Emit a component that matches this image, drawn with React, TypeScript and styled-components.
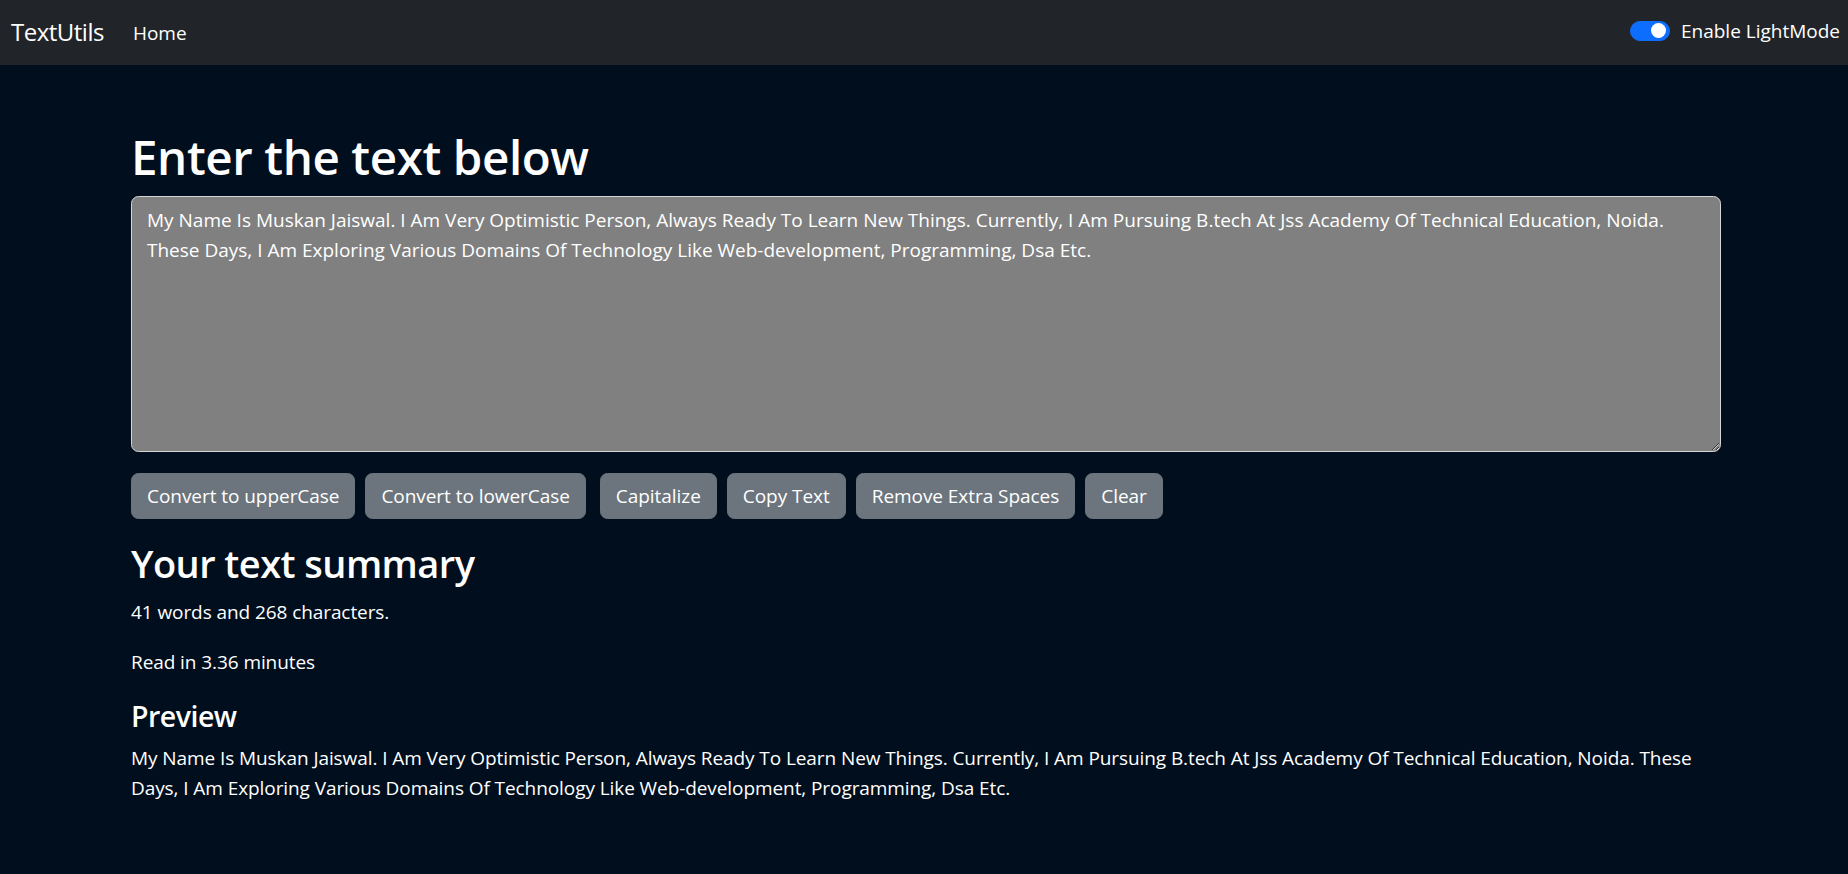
import React from "react";
import styled, { createGlobalStyle } from "styled-components";

const GlobalStyle = createGlobalStyle`
  html, body {
    margin: 0;
    padding: 0;
    background: #010e1d;
    font-family: "Open Sans", "Noto Sans", sans-serif;
    font-size: 19px;
    line-height: 30px;
    color: #ffffff;
  }
  * { box-sizing: border-box; }
`;

const Page = styled.div`
  min-height: 874px;
  background: #010e1d;
`;

const NavBar = styled.nav`
  height: 65px;
  background: #212529;
  display: flex;
  align-items: center;
  padding: 0 8px 0 11px;
`;

const Brand = styled.a`
  font-size: 24px;
  line-height: 36px;
  letter-spacing: -0.5px;
  color: #ffffff;
  margin-right: 19px;
  margin-top: -2px;
  text-decoration: none;
`;

const NavLink = styled.a`
  font-size: 19px;
  line-height: 30px;
  color: #ffffff;
  padding: 0 10px;
  text-decoration: none;
`;

const Spacer = styled.div`
  flex: 1;
`;

const SwitchWrap = styled.label`
  display: flex;
  align-items: center;
  gap: 11px;
  font-size: 19px;
  line-height: 30px;
  color: #ffffff;
  margin-top: -4px;
`;

const SwitchTrack = styled.span<{ $on: boolean }>`
  position: relative;
  display: inline-block;
  width: 40px;
  height: 20px;
  border-radius: 10px;
  background: ${(p) => (p.$on ? "#0d6efd" : "#ffffff")};
  border: 1px solid ${(p) => (p.$on ? "#0d6efd" : "#bbb")};
`;

const SwitchKnob = styled.span<{ $on: boolean }>`
  position: absolute;
  top: 1.5px;
  ${(p) => (p.$on ? "right: 2.5px;" : "left: 2.5px;")}
  width: 15px;
  height: 15px;
  border-radius: 50%;
  background: ${(p) => (p.$on ? "#ffffff" : "#bbb")};
`;

const Main = styled.main`
  padding: 63px 0 40px 131px;
`;

const Section = styled.section<{ $gapTop?: number }>`
  width: 1590px;
  margin-top: ${(p) => p.$gapTop ?? 0}px;
`;

const Title = styled.h1`
  margin: 0 0 11px;
  font-size: 47.5px;
  line-height: 57px;
  font-weight: 600;
  letter-spacing: -0.4px;
`;

const TextBox = styled.textarea`
  display: block;
  width: 100%;
  height: 256px;
  margin: 0;
  padding: 7.5px 15px;
  font-family: inherit;
  font-size: 19px;
  line-height: 30px;
  color: #ffffff;
  background: #808080;
  border: 1px solid #d4d6d8;
  border-radius: 7.5px;
  outline: none;
  resize: vertical;
`;

const ButtonRow = styled.div`
  display: flex;
  align-items: center;
  gap: 10px;
  margin-top: 21px;
`;

const Button = styled.button<{ $gapBefore?: number }>`
  height: 46px;
  padding: 0 15px;
  font-family: inherit;
  font-size: 19px;
  line-height: 30px;
  letter-spacing: -0.05px;
  color: #ffffff;
  background: #6c757d;
  border: 1px solid #6c757d;
  border-radius: 7.5px;
  cursor: pointer;
  white-space: nowrap;
  margin-left: ${(p) => p.$gapBefore ?? 0}px;
`;

const SubTitle = styled.h2`
  margin: 0 0 10px;
  font-size: 38px;
  line-height: 45.6px;
  font-weight: 600;
  letter-spacing: -0.55px;
`;

const SmallTitle = styled.h4`
  margin: 22px 0 10px;
  font-size: 28.5px;
  line-height: 34px;
  font-weight: 600;
  letter-spacing: -0.5px;
`;

const Text = styled.p`
  margin: 0 0 20px;
  font-size: 19px;
  line-height: 30px;
  letter-spacing: -0.08px;
`;

const content =
  "My Name Is Muskan Jaiswal. I Am Very Optimistic Person, Always Ready To Learn New Things. Currently, I Am Pursuing B.tech At Jss Academy Of Technical Education, Noida. These Days, I Am Exploring Various Domains Of Technology Like Web-development, Programming, Dsa Etc.";

const buttons: { label: string; gap?: number }[] = [
  { label: "Convert to upperCase" },
  { label: "Convert to lowerCase" },
  { label: "Capitalize", gap: 4 },
  { label: "Copy Text" },
  { label: "Remove Extra Spaces" },
  { label: "Clear" },
];

export default function App() {
  return (
    <Page>
      <GlobalStyle />
      <NavBar>
        <Brand href="#">TextUtils</Brand>
        <NavLink href="#">Home</NavLink>
        <Spacer />
        <SwitchWrap>
          <SwitchTrack $on>
            <SwitchKnob $on />
          </SwitchTrack>
          Enable LightMode
        </SwitchWrap>
      </NavBar>
      <Main>
        <Section>
          <Title>Enter the text below</Title>
          <TextBox rows={8} defaultValue={content} spellCheck={false} />
          <ButtonRow>
            {buttons.map((b) => (
              <Button key={b.label} $gapBefore={b.gap}>
                {b.label}
              </Button>
            ))}
          </ButtonRow>
        </Section>
        <Section $gapTop={22}>
          <SubTitle>Your text summary</SubTitle>
          <Text>41 words and 268 characters.</Text>
          <Text>Read in 3.36 minutes</Text>
          <SmallTitle>Preview</SmallTitle>
          <Text>{content}</Text>
        </Section>
      </Main>
    </Page>
  );
}
